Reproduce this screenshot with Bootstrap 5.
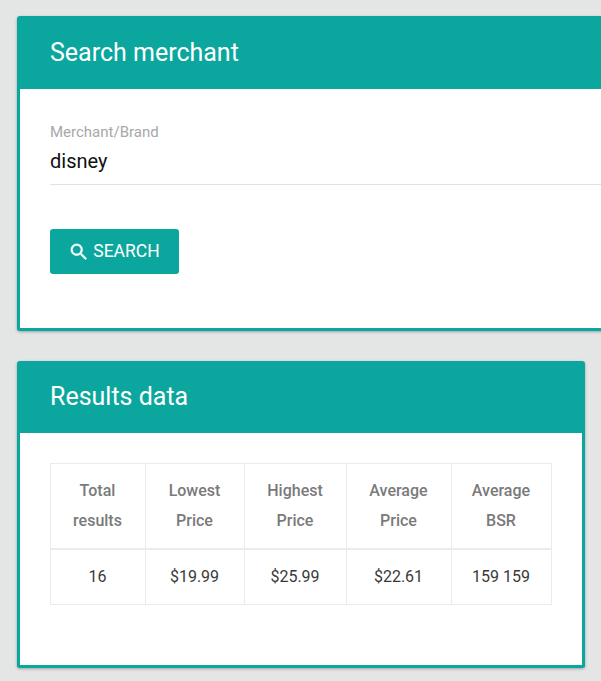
<!DOCTYPE html>
<html lang="en">
<head>
<meta charset="utf-8">
<title>Search merchant</title>
<link href="https://cdn.jsdelivr.net/npm/bootstrap@5.3.0/dist/css/bootstrap.min.css" rel="stylesheet">
<style>
html,body{height:681px;overflow:hidden}
body{background:#e4e6e5;font-family:Roboto,"Liberation Sans",sans-serif;margin:0}
.page-wrap{padding:16px 0 0 17px;height:681px;overflow:hidden}
.panel{border:3px solid #0ba79e;border-top:0;border-radius:3px;background:#fff;box-shadow:0 1px 3px rgba(0,0,0,.3);overflow:hidden}
.panel-wide{width:640px;height:315px;margin-bottom:30px}
.panel-fit{width:568px;height:307px}
.panel-head{background:#0ba79e;color:#fff;margin:0 -3px;padding:0 33px;height:73px;display:flex;align-items:center;font-size:25px;font-weight:400;line-height:1.2}
.panel-fit .panel-head{height:72px}
.panel-inner{padding:30px}
.panel-wide .panel-inner{padding-top:31px}
.field-label{font-size:15px;line-height:18px;color:#a8a8a8;margin:0 0 5px}
.field-input{display:block;width:100%;border:0;border-bottom:1px solid #e2e2e2;border-radius:0;outline:0;padding:0 0 9px;font-size:20px;line-height:24px;color:#111;background:transparent;height:39px;font-family:inherit}
.go-btn{margin-top:44px;background:#0ba79e;border:0;border-radius:3px;color:#fff;width:129px;height:45px;font-size:17.5px;padding:0 1px 0 0;display:flex;align-items:center;justify-content:center;gap:3px;font-family:inherit}
.go-btn:hover{background:#0ba79e;color:#fff}
.data-table{width:501px;margin:0;table-layout:fixed;border-collapse:collapse}
.data-table th,.data-table td{border:1px solid #ebebeb;text-align:center;padding:0 1px 0 0;font-size:16px;vertical-align:middle;box-shadow:none}
.data-table th{color:#7a7a7a;font-weight:500;line-height:30px;height:85px;border-bottom-width:2px}
.data-table td{color:#3a3a3a;font-weight:400;height:56px}
</style>
</head>
<body>
<div class="page-wrap">
  <section class="panel panel-wide">
    <h2 class="panel-head">Search merchant</h2>
    <div class="panel-inner">
      <label class="field-label" for="brand">Merchant/Brand</label>
      <input id="brand" class="field-input" type="text" value="disney">
      <button type="button" class="btn go-btn">
        <svg width="22" height="22" viewBox="0 0 24 24" fill="#fff" stroke="#fff" stroke-width=".35" aria-hidden="true"><path d="M15.5 14h-.79l-.28-.27A6.47 6.47 0 0 0 16 9.5 6.5 6.5 0 1 0 9.5 16c1.61 0 3.09-.59 4.23-1.57l.27.28v.79l5 4.99L20.49 19l-4.99-5zm-6 0C7.01 14 5 11.99 5 9.5S7.01 5 9.500 5 14 7.010 14 9.500 11.990 14 9.500 14z"/></svg>
        <span>SEARCH</span>
      </button>
    </div>
  </section>
  <section class="panel panel-fit">
    <h2 class="panel-head">Results data</h2>
    <div class="panel-inner">
      <table class="table data-table">
        <colgroup><col style="width:95px"><col style="width:99px"><col style="width:102px"><col style="width:105px"><col style="width:100px"></colgroup>
        <thead>
          <tr><th>Total<br>results</th><th>Lowest<br>Price</th><th>Highest<br>Price</th><th>Average<br>Price</th><th>Average<br>BSR</th></tr>
        </thead>
        <tbody>
          <tr><td>16</td><td>$19.99</td><td>$25.99</td><td>$22.61</td><td>159 159</td></tr>
        </tbody>
      </table>
    </div>
  </section>
</div>
</body>
</html>
